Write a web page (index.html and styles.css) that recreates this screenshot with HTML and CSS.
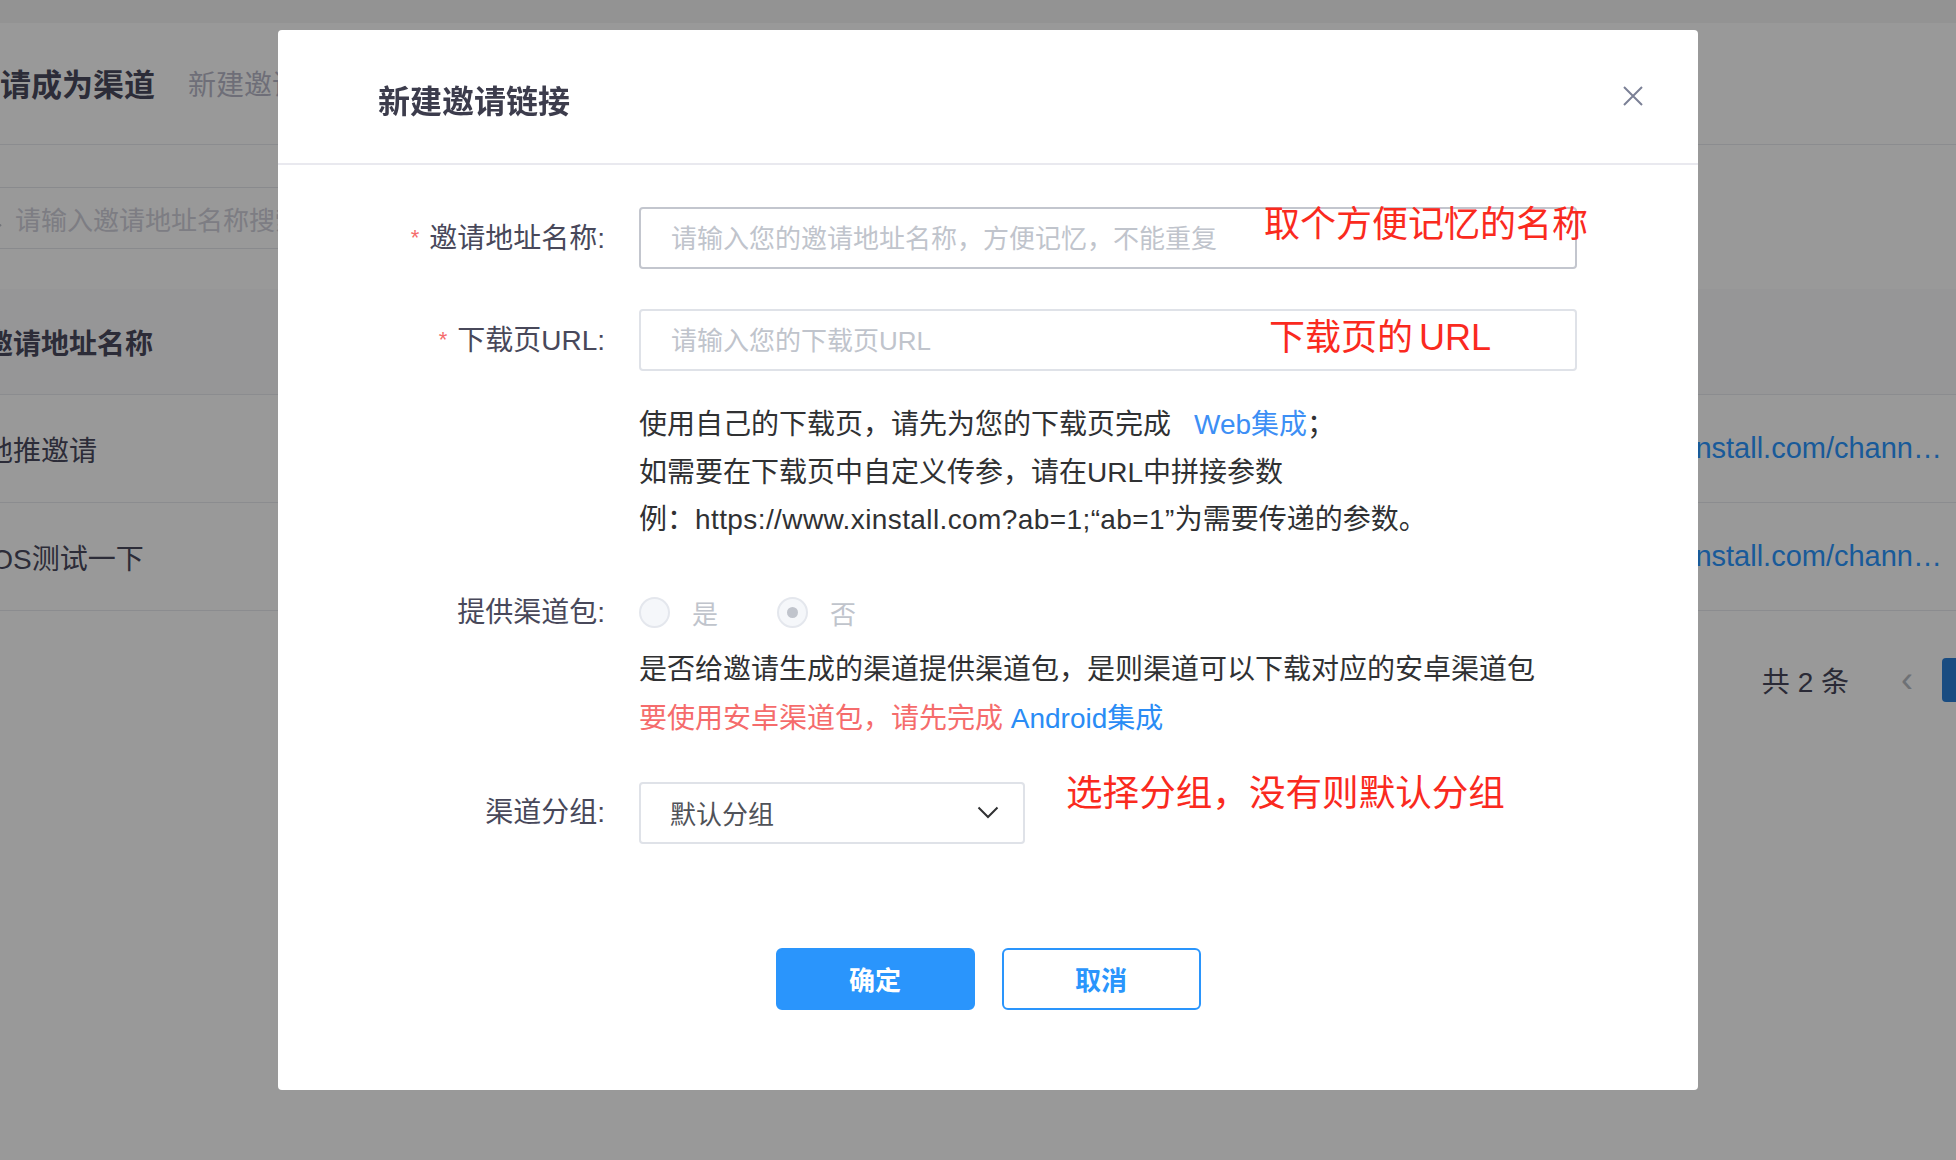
FILE: index.html
```html
<!DOCTYPE html>
<html lang="zh-CN">
<head>
<meta charset="utf-8">
<title>新建邀请链接</title>
<link rel="stylesheet" href="styles.css">
</head>
<body>
<div class="page">
  <div class="topbar"></div>
  <div class="page-head">
    <h1 class="page-title">邀请成为渠道</h1>
    <span class="page-sub">新建邀请链接</span>
  </div>
  <div class="search">
    <svg class="search-icon" width="18" height="18" viewBox="0 0 18 18"><circle cx="7.5" cy="7.5" r="6" fill="none" stroke="#c0c4cc" stroke-width="2"/><line x1="12" y1="12" x2="17" y2="17" stroke="#c0c4cc" stroke-width="2"/></svg>
    <span class="search-ph">请输入邀请地址名称搜索</span>
  </div>
  <div class="table">
    <div class="tr th">
      <div class="td name">邀请地址名称</div>
      <div class="td link"></div>
    </div>
    <div class="tr">
      <div class="td name">地推邀请</div>
      <div class="td link"><span class="lnk">https://app.xinstall.com/chann…</span></div>
    </div>
    <div class="tr">
      <div class="td name">iOS测试一下</div>
      <div class="td link"><span class="lnk">https://app.xinstall.com/chann…</span></div>
    </div>
  </div>
  <div class="pager">
    <span class="total">共 2 条</span>
    <span class="prev">&lsaquo;</span>
    <span class="pg-btn">1</span>
  </div>
</div>

<div class="mask">
  <div class="dialog">
    <div class="dlg-head">
      <h2 class="dlg-title">新建邀请链接</h2>
      <span class="dlg-close"><svg width="24" height="24" viewBox="0 0 24 24"><path d="M3 3 L21 21 M21 3 L3 21" stroke="#7b8096" stroke-width="2" fill="none"/></svg></span>
    </div>
    <div class="form">
      <div class="item item-name">
        <div class="label"><span class="req">*</span>邀请地址名称:</div>
        <div class="ctrl">
          <div class="input input-hover"><span class="ph">请输入您的邀请地址名称，方便记忆，不能重复</span>
            <span class="note note-1">取个方便记忆的名称</span></div>
        </div>
      </div>
      <div class="item item-url">
        <div class="label"><span class="req">*</span>下载页URL:</div>
        <div class="ctrl">
          <div class="input"><span class="ph">请输入您的下载页URL</span>
            <span class="note note-2">下载页的 URL</span></div>
          <div class="help">
            <p>使用自己的下载页，请先为您的下载页完成<a class="link link-web">Web集成</a>；</p>
            <p>如需要在下载页中自定义传参，请在URL中拼接参数</p>
            <p>例：<span class="latin">https://www.xinstall.com?ab=1;“ab=1”</span>为需要传递的参数。</p>
          </div>
        </div>
      </div>
      <div class="item item-pkg">
        <div class="label">提供渠道包:</div>
        <div class="ctrl">
          <div class="radios">
            <span class="radio"><span class="radio-dot"></span>是</span>
            <span class="radio"><span class="radio-dot on"></span>否</span>
          </div>
          <div class="desc">
            <p>是否给邀请生成的渠道提供渠道包，是则渠道可以下载对应的安卓渠道包</p>
            <p class="warn">要使用安卓渠道包，请先完成 <a class="link">Android集成</a></p>
          </div>
        </div>
      </div>
      <div class="item item-group">
        <div class="label">渠道分组:</div>
        <div class="ctrl select-row">
          <div class="select"><span>默认分组</span>
            <svg width="22" height="13" viewBox="0 0 22 13"><polyline points="1.5,1.5 11,11 20.5,1.5" fill="none" stroke="#303133" stroke-width="2"/></svg>
          </div>
          <span class="note-inline">选择分组，没有则默认分组</span>
        </div>
      </div>
      <div class="footer">
        <span class="btn btn-primary">确定</span>
        <span class="btn btn-plain">取消</span>
      </div>
    </div>
  </div>
</div>
</body>
</html>
```
FILE: styles.css
```css
* { box-sizing: border-box; margin: 0; padding: 0; }
html, body { width: 1956px; height: 1160px; overflow: hidden; }
body {
  font-family: "Liberation Sans", "Noto Sans CJK SC", sans-serif;
  background: #fff;
  color: #303133;
}

/* background page */
.page { width: 2040px; margin-left: -31px; }
.topbar { height: 23px; background: #f5f5f5; }
.page-head {
  height: 122px; display: flex; align-items: center; gap: 33px;
  padding-top: 4px; border-bottom: 1px solid #e8e9ee;
}
.page-title { font-size: 31px; font-weight: 700; line-height: 40px; color: #4a4a5e; }
.page-sub { font-size: 28px; line-height: 40px; color: #b8b8c8; }
.search {
  margin-top: 42px; width: 560px; height: 62px;
  border: 1px solid #e4e6ec; border-radius: 4px;
  display: flex; align-items: center; padding-left: 14px; gap: 13px;
}
.search-ph { font-size: 26px; color: #d0d0da; }
.table { margin-top: 40px; }
.tr { display: flex; justify-content: space-between; align-items: center; height: 108px; border-bottom: 1px solid #e8e9ee; }
.tr.th { height: 106px; background: #fbfbfc; }
.td { font-size: 28px; color: #4a4a5e; white-space: nowrap; }
.th .td { font-weight: 700; }
.td.name { padding-left: 16px; }
.td.link { padding-right: 67px; }
.lnk { color: #2b96ff; font-size: 29px; }
.pager {
  display: flex; justify-content: flex-end; align-items: center;
  margin-top: 47px; height: 44px; padding-right: 23px;
}
.total { font-size: 28px; color: #47475a; }
.prev { font-size: 36px; color: #b8bcc4; margin-left: 52px; line-height: 44px; }
.pg-btn {
  margin-left: 29px; width: 44px; height: 44px; border-radius: 4px;
  background: #2b7fd8; color: #fff; font-size: 22px;
  display: flex; align-items: center; justify-content: center;
}

/* mask + dialog */
.mask { position: fixed; inset: 0; background: rgba(0, 0, 0, 0.4); }
.dialog {
  margin: 30px 0 0 278px; width: 1420px; height: 1060px;
  background: #fff; border-radius: 4px;
}
.dlg-head {
  height: 135px; padding: 50px 0 0 100px;
  border-bottom: 2px solid #e9e9ef; position: relative;
}
.dlg-title { font-size: 32px; font-weight: 700; line-height: 44px; color: #3c3c4c; }
.dlg-close { position: absolute; left: 1343px; top: 54px; width: 24px; height: 24px; display: flex; }

.form { padding-top: 42px; }
.item { display: grid; grid-template-columns: 361px 938px; }
.label {
  text-align: right; padding-right: 34px;
  font-size: 28px; line-height: 62px; color: #48485a; white-space: nowrap;
}
.req { color: #f56c6c; font-size: 22px; margin-right: 10px; vertical-align: 3px; }
.item-name { margin-bottom: 39px; }
.item-url { margin-bottom: 38px; }
.item-pkg { margin-bottom: 39px; }

.input {
  height: 62px; border: 2px solid #dfe2e8; border-radius: 4px;
  padding: 0 0 3px 30px; display: flex; align-items: center; position: relative;
}
.input-hover { border-color: #c3c6ce; }
.ph { font-size: 26px; color: #c0c4cc; }
.note {
  position: absolute; font-size: 36px; line-height: 40px;
  color: #fa2a1e; white-space: nowrap;
}
.note-1 { left: 623px; top: -4px; }
.note-2 { left: 628px; top: 7px; word-spacing: -4px; }

.help { margin-top: 30px; font-size: 28px; line-height: 47.5px; color: #303133; white-space: nowrap; }
.latin { letter-spacing: 0.4px; }
.link { color: #3d8ff5; text-decoration: none; }
.link-web { margin-left: 23px; }

.radios { display: flex; align-items: center; height: 62px; }
.radio { display: flex; align-items: center; margin-right: 59px; font-size: 26px; color: #c0c4cc; }
.radio-dot {
  width: 31px; height: 31px; border-radius: 50%;
  border: 2px solid #e4e7ed; background: #f5f7fa; margin-right: 22px;
  display: flex; align-items: center; justify-content: center;
}
.radio-dot.on::after { content: ""; width: 11px; height: 11px; border-radius: 50%; background: #c0c4cc; }
.desc { margin-top: 1px; font-size: 28px; line-height: 49px; color: #303133; white-space: nowrap; }
.warn { color: #f56c6c; }
.warn .link { color: #2a8cf5; }

.select-row { display: flex; align-items: flex-start; }
.select {
  width: 386px; height: 62px; flex: none;
  border: 2px solid #dfe2e8; border-radius: 4px;
  padding: 0 24px 0 29px; display: flex; align-items: center; justify-content: space-between;
  font-size: 26px; color: #505258;
}
.note-inline { font-size: 36.6px; line-height: 40px; color: #fa2a1e; margin: -8px 0 0 41px; white-space: nowrap; }

.footer { display: flex; justify-content: center; gap: 27px; margin-top: 104px; }
.btn {
  width: 199px; height: 62px; border-radius: 6px; border: 2px solid #2a95fc;
  display: flex; align-items: center; justify-content: center;
  font-size: 26px; font-weight: 700;
}
.btn-primary { background: #2a95fc; color: #fff; }
.btn-plain { background: #fff; color: #2a95fc; }
```
